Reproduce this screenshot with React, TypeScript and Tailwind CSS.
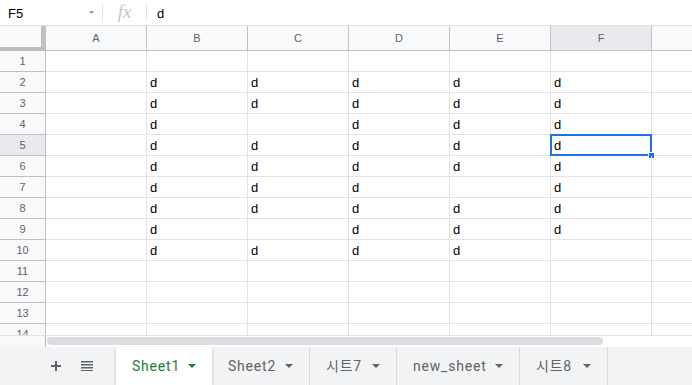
import React from "react";

const cols = ["A", "B", "C", "D", "E", "F"];

const filled: Record<number, string> = {
  2: "BCDEF",
  3: "BCDEF",
  4: "BDEF",
  5: "BCDEF",
  6: "BCDEF",
  7: "BCDF",
  8: "BCDEF",
  9: "BDEF",
  10: "BCDE",
};

const tabs = [
  { name: "Sheet1", w: "w-[96px]", active: true },
  { name: "Sheet2", w: "w-[98px]" },
  { name: "시트7", w: "w-[87px]" },
  { name: "new_sheet", w: "w-[123px]" },
  { name: "시트8", w: "w-[88px]" },
];

function Caret({ className }: { className: string }) {
  return (
    <svg width="8" height="4" viewBox="0 0 8 4" className={className}>
      <path d="M0 0h8L4 4z" fill="currentColor" />
    </svg>
  );
}

function FormulaBar() {
  return (
    <div className="h-[26px] flex items-stretch border-b border-[#e1e1e1] bg-white text-[13px] text-black font-['Liberation_Sans',Arial,sans-serif]">
      <div className="w-[102px] flex items-center justify-between pl-[8px] pr-[8px] pt-[2px]">
        <span className="leading-[24px]">F5</span>
        <Caret className="text-[#80868b] w-[5px] h-[3px] mt-[-2px]" />
      </div>
      <div className="w-px my-[4px] bg-[#e1e1e1]" />
      <div className="w-[43px] flex items-center justify-center text-[19px] italic text-[#c4c7c5] font-['Liberation_Serif',serif] leading-none pb-[2px]">
        fx
      </div>
      <div className="w-px my-[4px] bg-[#e1e1e1]" />
      <div className="pl-[10px] pt-[2px] leading-[24px]">d</div>
    </div>
  );
}

function HeaderRow() {
  return (
    <div className="flex h-[25px] bg-[#f8f9fa] border-b border-[#c0c0c0] text-[11px] text-[#5f6368] font-['Liberation_Sans',Arial,sans-serif]">
      <div className="w-[46px] shrink-0 border-r-[5px] border-b-[4px] border-[#c0c0c0] mb-[-1px]" />
      {cols.map((c) => (
        <div
          key={c}
          className={`w-[101px] shrink-0 border-r border-[#c0c0c0] text-center leading-[24px] ${c === "F" ? "bg-[#e8eaed]" : ""}`}
        >
          {c}
        </div>
      ))}
      <div className="flex-1" />
    </div>
  );
}

function Row({ n }: { n: number }) {
  const f = filled[n] || "";
  return (
    <div className="flex h-[21px] shrink-0">
      <div
        className={`w-[46px] shrink-0 border-r border-b border-[#c0c0c0] text-center text-[11px] leading-[20px] text-[#5f6368] ${n === 5 ? "bg-[#e8eaed]" : "bg-[#f8f9fa]"}`}
      >
        {n}
      </div>
      {cols.map((c) => (
        <div
          key={c}
          className="relative w-[101px] shrink-0 border-r border-b border-[#e2e2e3] pl-[3px] pt-[2px] text-[13px] leading-[18px] text-black"
        >
          {f.includes(c) ? "d" : ""}
          {n === 5 && c === "F" && (
            <div className="absolute left-[-1px] top-[-1px] w-[102px] h-[22px] border-2 border-[#1a73e8]">
              <div className="absolute right-[-5px] bottom-[-5px] w-[7px] h-[7px] bg-[#1a73e8] border border-white" />
            </div>
          )}
        </div>
      ))}
      <div className="flex-1 border-b border-[#e2e2e3]" />
    </div>
  );
}

function Grid() {
  const rows = Array.from({ length: 14 }, (_, i) => i + 1);
  return (
    <div className="h-[284px] overflow-hidden flex flex-col font-['Liberation_Sans',Arial,sans-serif]">
      {rows.map((n) => (
        <Row key={n} n={n} />
      ))}
    </div>
  );
}

function ScrollArea() {
  return (
    <div className="h-[12px] flex border-t border-[#e2e2e3]">
      <div className="w-[46px] shrink-0 bg-[#f8f9fa] border-r border-[#c0c0c0]" />
      <div className="flex-1 bg-white pl-px pt-px">
        <div className="w-[556px] h-[8px] rounded-full bg-[#dadce0]" />
      </div>
    </div>
  );
}

function TabBar() {
  return (
    <div className="h-[38px] flex bg-[#f1f3f4] font-['Roboto','Noto_Sans_CJK_KR',sans-serif] text-[14px] font-normal tracking-[0.8px]">
      <div className="w-[116px] shrink-0 flex items-center pl-[51px] gap-[20px]">
        <svg width="10" height="10" viewBox="0 0 10 10">
          <path d="M5 0v10M0 5h10" stroke="#5f6368" strokeWidth="2" />
        </svg>
        <svg width="12" height="10" viewBox="0 0 12 10">
          <path d="M0 1h12M0 4h12M0 7h12M0 10h12" stroke="#5f6368" strokeWidth="1.6" transform="translate(0 -0.2)" />
        </svg>
      </div>
      {tabs.map((t) => (
        <div
          key={t.name}
          className={`${t.w} shrink-0 flex items-center justify-between pl-[16px] pr-[16px] ${t.active ? "bg-white text-[#188038] shadow-[0_1px_3px_rgba(60,64,67,0.3)] z-10" : "border-r border-[#dadce0] text-[#5f6368]"}`}
        >
          <span className="leading-[38px] whitespace-nowrap">{t.name}</span>
          <Caret className={t.active ? "text-[#188038]" : "text-[#5f6368]"} />
        </div>
      ))}
      <div className="flex-1" />
    </div>
  );
}

export default function App() {
  return (
    <div className="w-[692px] h-[385px] overflow-hidden bg-white flex flex-col">
      <FormulaBar />
      <HeaderRow />
      <Grid />
      <ScrollArea />
      <TabBar />
    </div>
  );
}
